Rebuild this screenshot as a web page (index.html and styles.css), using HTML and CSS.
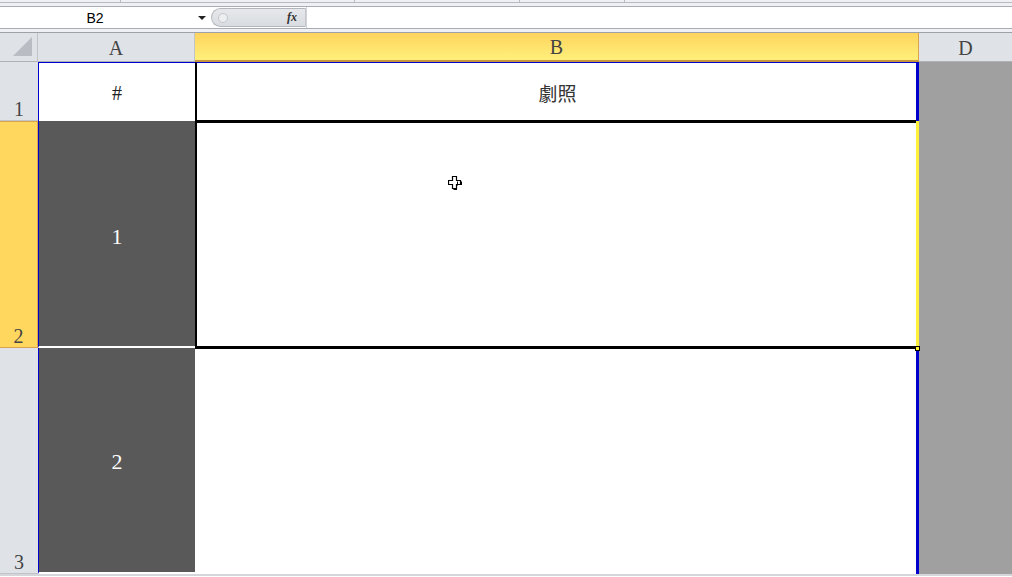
FILE: index.html
```html
<!DOCTYPE html>
<html>
<head>
<meta charset="utf-8">
<link rel="stylesheet" href="styles.css">
</head>
<body>
<div class="app">
  <div class="ribbon-edge">
    <div class="seg s1"></div><div class="seg s2"></div><div class="seg s3"></div><div class="seg s4"></div><div class="seg s5"></div>
  </div>
  <div class="fbar">
    <div class="namebox"><span class="name">B2</span><span class="arrow"></span></div>
    <div class="fx-ctrl"><span class="knob"></span><span class="fx">fx</span></div>
    <div class="formula"></div>
  </div>
  <div class="fgap"></div>
  <div class="sheet">
    <div class="corner"><svg width="22" height="22" viewBox="0 0 22 22"><polygon points="21,2 21,21 2,21" fill="#b9bdc3"/></svg></div>
    <div class="colh">A</div>
    <div class="colh sel">B</div>
    <div class="colh d">D</div>

    <div class="rowh"><span>1</span></div>
    <div class="cell a1">#</div>
    <div class="cell b1">劇照</div>
    <div class="cell dcol"></div>

    <div class="rowh sel"><span>2</span></div>
    <div class="cell dark a2">1</div>
    <div class="cell b2">
      <div class="selbox"></div>
      <div class="handle"></div>
      <svg class="cursor" width="14" height="14" viewBox="0 0 14 14"><path d="M4.5 0.5h4v4h4v4h-4v4h-4v-4h-4v-4h4z" fill="#fff" stroke="#000" stroke-width="1.2"/><path d="M9.5 5.5v4M5.5 13.5h3.5M13.5 5.5v3.5" stroke="#000" stroke-width="1" fill="none"/></svg>
    </div>
    <div class="cell dcol"></div>

    <div class="rowh"><span>3</span></div>
    <div class="cell dark a3">2</div>
    <div class="cell b3"></div>
    <div class="cell dcol"></div>
  </div>
  <div class="bottom-line"></div>
</div>
</body>
</html>
```

FILE: styles.css
```css
* { box-sizing: border-box; }
html, body { margin: 0; padding: 0; }
body {
  width: 1012px;
  height: 577px;
  overflow: hidden;
  background: #ffffff;
  font-family: "Liberation Serif", "Noto Sans CJK TC", serif;
}
.app { width: 1012px; height: 577px; display: flex; flex-direction: column; }

.ribbon-edge {
  height: 7px;
  flex: none;
  display: flex;
  background: #eef0f3;
  border-bottom: 1px solid #a9adb3;
}
.seg { height: 3px; border-bottom: 1px solid #b7bbc1; border-right: 1px solid #b7bbc1; }
.s1 { width: 121px; }
.s2 { width: 234px; }
.s3 { width: 165px; }
.s4 { width: 105px; }
.s5 { flex: 1; border-right: none; }

.fbar {
  height: 22px;
  flex: none;
  display: flex;
  align-items: stretch;
  background: #ffffff;
  border-bottom: 1px solid #a9adb3;
}
.namebox {
  width: 211px;
  display: flex;
  align-items: center;
  background: #fff;
}
.name {
  width: 190px;
  text-align: center;
  font-family: "Liberation Sans", Arial, sans-serif;
  font-size: 14px;
  color: #000;
}
.arrow {
  margin-left: 8px;
  width: 0; height: 0;
  border-left: 4px solid transparent;
  border-right: 4px solid transparent;
  border-top: 4px solid #222;
}
.fx-ctrl {
  width: 95px;
  margin: 1px 0;
  display: flex;
  align-items: center;
  justify-content: space-between;
  padding: 0 8px 0 6px;
  background: linear-gradient(#e6e8eb, #d9dce0);
  border: 1px solid #b3b7bd;
  border-right: 1px solid #c4c7cc;
  border-radius: 11px 0 0 11px;
}
.knob {
  width: 10px; height: 10px;
  border-radius: 50%;
  background: #eceef0;
  border: 1px solid #c3c6cb;
}
.fx {
  font-family: "Liberation Serif", serif;
  font-style: italic;
  font-weight: bold;
  font-size: 12px;
  color: #333;
}
.formula { flex: 1; background: #fff; border-left: 1px solid #d0d3d7; }

.fgap {
  height: 4px;
  flex: none;
  background: #eef0f3;
  border-bottom: 1px solid #9ea2a8;
}

.sheet {
  flex: none;
  display: grid;
  grid-template-columns: 38px 157px 724px 93px;
  grid-template-rows: 29px 59px 227px 226px;
}
.corner {
  background: #dfe3e8;
  border-right: 1px solid #c0c4ca;
  border-bottom: 1px solid #aeb2b8;
  display: flex;
  align-items: flex-end;
  justify-content: flex-end;
  padding: 0 4px 4px 0;
}
.colh {
  background: #dfe3e8;
  border-right: 1px solid #c0c4ca;
  border-bottom: 1px solid #aeb2b8;
  display: flex;
  align-items: center;
  justify-content: center;
  font-size: 20px;
  color: #444;
  padding-top: 2px;
}
.colh.sel {
  background: linear-gradient(#fdd35c, #fee873 70%, #ffef7a);
  border-right: 1px solid #d9a44c;
  border-bottom: 2px solid #c8963e;
}
.colh.d { border-right: none; }

.rowh {
  background: #dfe3e8;
  border-bottom: 1px solid #c0c4ca;
  display: flex;
  align-items: flex-end;
  justify-content: center;
  font-size: 20px;
  color: #444;
  line-height: 22px;
}
.rowh.sel {
  background: #ffd75f;
  border-top: 1px solid #d9a44c;
  border-bottom: 1px solid #d9a44c;
  border-right: 1px solid #d9a44c;
}

.cell { background: #fff; }
.a1 {
  border-top: 1px solid #0000cc;
  border-left: 1px solid #0000cc;
  display: flex;
  align-items: center;
  justify-content: center;
  font-size: 20px;
  color: #222;
  padding-top: 2px;
}
.b1 {
  border-top: 1px solid #0000cc;
  border-left: 2px solid #000;
  border-right: 3px solid #0000cc;
  display: flex;
  align-items: center;
  justify-content: center;
  font-family: "Noto Sans CJK TC", sans-serif;
  font-size: 19px;
  color: #333;
  padding-left: 2px;
}
.dark {
  background: #595959;
  border-left: 1px solid #0000cc;
  display: flex;
  align-items: center;
  justify-content: center;
  color: #ffffff;
  font-size: 22px;
}
.a2 { border-bottom: 2px solid #ffffff; padding-top: 6px; }
.a3 { border-bottom: 2px solid #ffffff; padding-top: 4px; }
.b2 {
  position: relative;
  border-right: 3px solid #fff03a;
}
.selbox {
  position: absolute;
  left: 0; top: -1px; right: 0; bottom: -1px;
  border: 2px solid #000;
  border-top-width: 3px;
  border-bottom-width: 3px;
  border-right: none;
}
.handle {
  position: absolute;
  right: -4px;
  bottom: -3px;
  width: 5px; height: 5px;
  background: #fff03a;
  border: 1px solid #000;
}
.cursor { position: absolute; left: 253px; top: 55px; }
.b3 {
  border-right: 3px solid #0000cc;
  border-top: 1px solid #fff;
}
.dcol { background: #a0a0a0; }

.bottom-line { flex: none; height: 2px; background: #d4d6d9; }
```
